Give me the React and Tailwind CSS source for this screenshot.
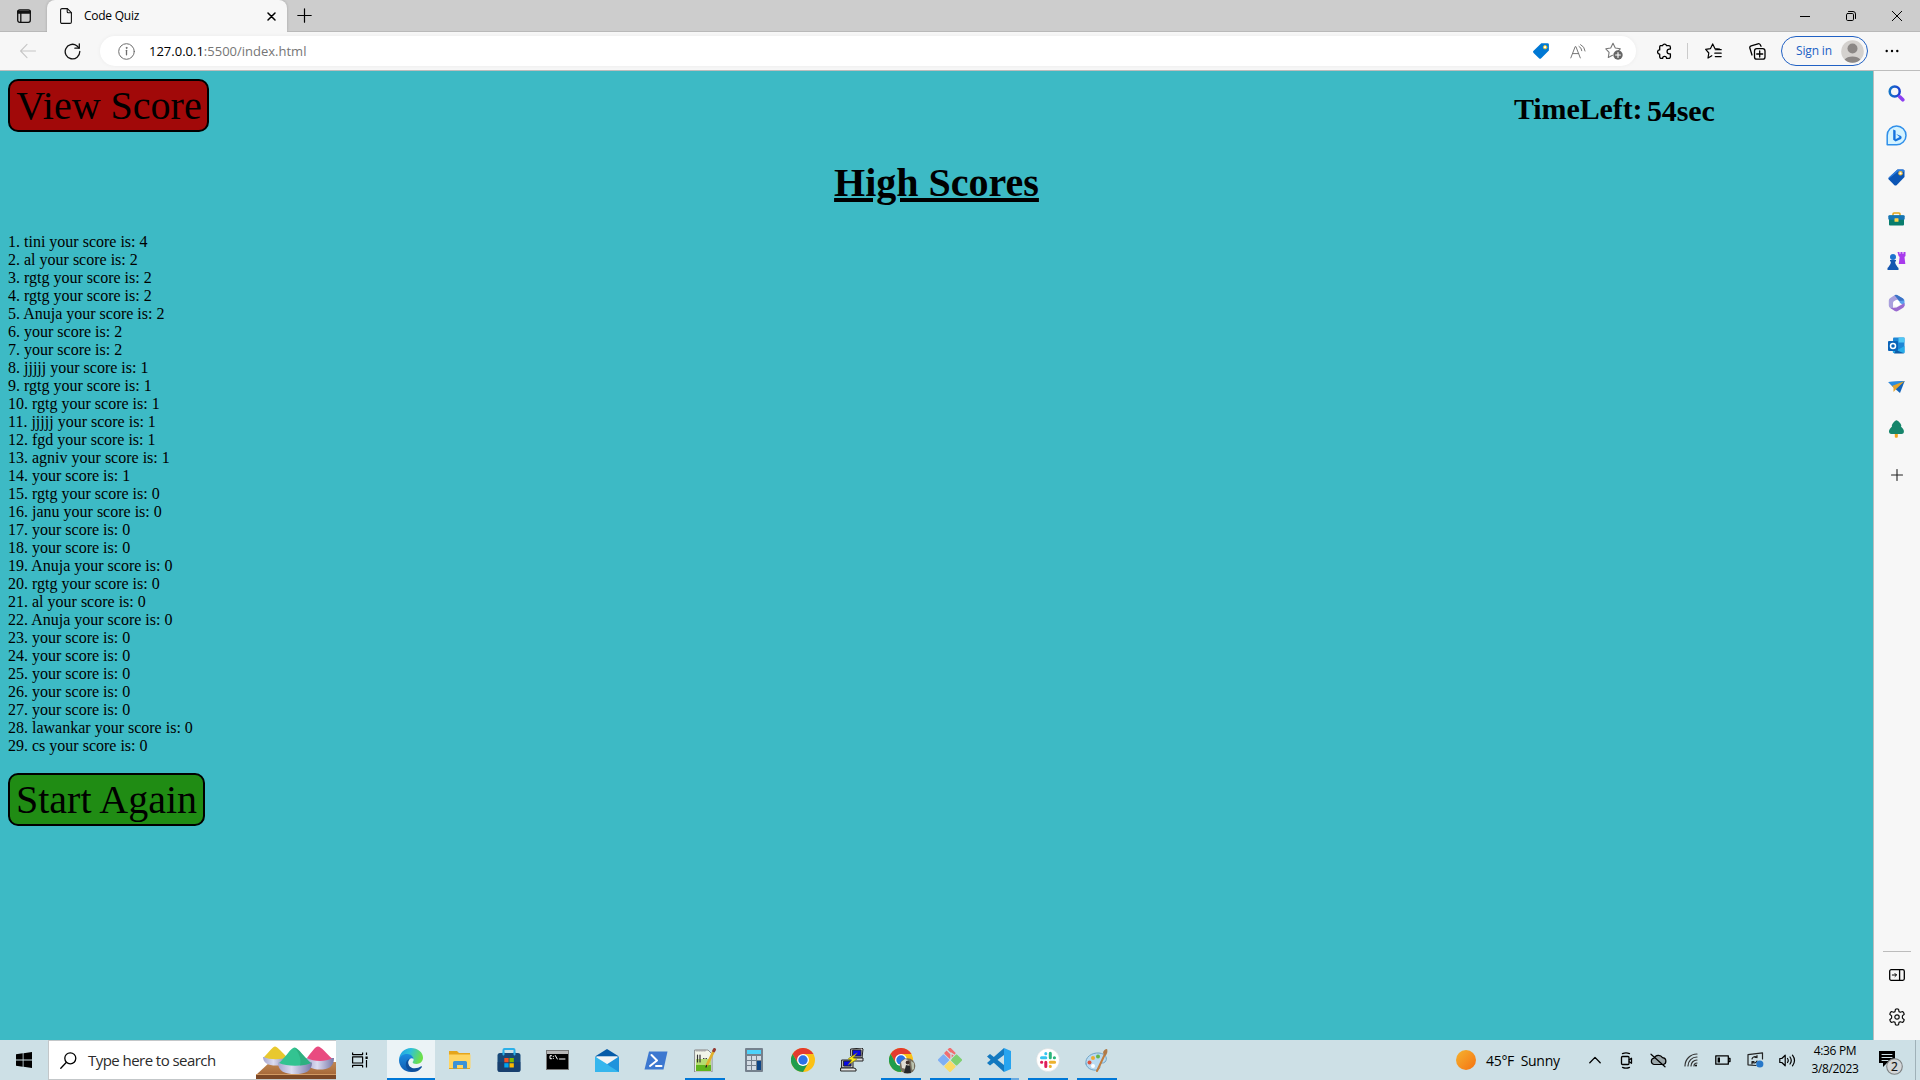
import React from "react";

const entries = [
  "tini your score is: 4", "al your score is: 2", "rgtg your score is: 2", "rgtg your score is: 2",
  "Anuja your score is: 2", "your score is: 2", "your score is: 2", "jjjjj your score is: 1",
  "rgtg your score is: 1", "rgtg your score is: 1", "jjjjj your score is: 1", "fgd your score is: 1",
  "agniv your score is: 1", "your score is: 1", "rgtg your score is: 0", "janu your score is: 0",
  "your score is: 0", "your score is: 0", "Anuja your score is: 0", "rgtg your score is: 0",
  "al your score is: 0", "Anuja your score is: 0", "your score is: 0", "your score is: 0",
  "your score is: 0", "your score is: 0", "your score is: 0", "lawankar your score is: 0", "cs your score is: 0",
];

function Icon({ s = 20, w, h, sw = 1.1, stroke = "#111", fill = "none", children, className = "" }) {
  const W = w || s, H = h || s;
  return (
    <svg width={W} height={H} viewBox={`0 0 ${W} ${H}`} fill={fill} stroke={stroke} strokeWidth={sw} strokeLinecap="round" strokeLinejoin="round" className={`block shrink-0 ${className}`}>
      {children}
    </svg>
  );
}

function Cell({ className = "", children }) {
  return <div className={`flex shrink-0 items-center justify-center ${className}`}>{children}</div>;
}

function TitleBar() {
  return (
    <div className="flex h-8 bg-[#cdcdcd]">
      <Cell className="w-[47px] border-b border-[#b9b9b9] pl-px">
        <Icon s={14} sw={1.3}><rect x="0.7" y="0.9" width="12.6" height="12.4" rx="2" /><path d="M1 2.6h12M1 3.8h12" strokeWidth="2" /><path d="M3.8 4v9" /></Icon>
      </Cell>
      <div className="flex w-60 items-center rounded-t-lg bg-[#f7f7f7] pl-[13px] pr-[11px] shadow-[0_0_3px_rgba(0,0,0,0.2)]">
        <Icon w={12} h={16} sw={1.1}><path d="M2 .6h5.4l4 4V14a1.4 1.4 0 0 1-1.4 1.4H2A1.4 1.4 0 0 1 .6 14V2A1.4 1.4 0 0 1 2 .6z" /><path d="M7.2.8v3a1 1 0 0 0 1 1h3" /></Icon>
        <span className="ml-3 flex-1 text-[12px] leading-4 tracking-[-0.25px]">Code Quiz</span>
        <Icon s={9} sw={1.5} stroke="#000"><path d="M1 1l7 7M8 1L1 8" /></Icon>
      </div>
      <div className="flex flex-1 items-center border-b border-[#b9b9b9] pl-[10px]">
        <Icon s={15} sw={1.2} stroke="#000"><path d="M7.5.8v13.4M.8 7.5h13.4" /></Icon>
      </div>
      <div className="flex border-b border-[#b9b9b9]">
        <Cell className="w-[46px]"><Icon s={10} sw={1} stroke="#000"><path d="M0 5.5h10" /></Icon></Cell>
        <Cell className="w-[46px]"><Icon s={10} sw={1} stroke="#000"><rect x=".5" y="2.5" width="7" height="7" rx="1.2" /><path d="M2.5.5H7A2.5 2.5 0 0 1 9.500 3v4.500" /></Icon></Cell>
        <Cell className="w-[46px]"><Icon s={10} sw={1} stroke="#000"><path d="M.3.3l9.400 9.400M9.700.3L.3 9.700" /></Icon></Cell>
      </div>
    </div>
  );
}

function Toolbar() {
  return (
    <div className="flex h-[39px] items-center border-b border-[#bdbdbd] bg-[#f7f7f7]">
      <Cell className="w-14"><Icon s={16} sw={1.1} stroke="#c6c6c6"><path d="M15.500 8H.6M7 1.400L.6 8 7 14.600" /></Icon></Cell>
      <Cell className="w-8"><Icon s={17} sw={1.3}><path d="M15.800 8.500A7.300 7.300 0 1 1 12.800 2.700L15 5" /><path d="M15.300.8v4.400h-4.400" /></Icon></Cell>
      <div className="ml-3 flex h-[30px] w-[1536px] items-center rounded-full bg-white shadow-[0_0_4px_rgba(0,0,0,0.05)]">
        <Cell className="w-[52px]"><Icon s={17} sw={1} stroke="#6d6d6d"><circle cx="8.500" cy="8.500" r="7.800" /><path d="M8.500 7.300v4.500" strokeWidth="1.300" /><circle cx="8.500" cy="4.900" r=".5" fill="#6d6d6d" /></Icon></Cell>
        <span className="ml-[-3px] flex-1 pt-px text-[13px] text-[#767676]"><span className="text-black">127.0.0.1</span>:5500/index.html</span>
        <Cell className="w-9">
          <Icon w={16} h={16} stroke="none"><path d="M8.300.2H14.500A1.400 1.400 0 0 1 15.900 1.600V7.500L8.200 15.200a1.500 1.500 0 0 1-2.200 0L.6 9.900a1.500 1.500 0 0 1 0-2.200z" fill="#0078d4" /><circle cx="12.100" cy="4.200" r="1.700" fill="#fff" stroke="#e8c22e" strokeWidth="1" /></Icon>
        </Cell>
        <Cell className="w-9 pl-px"><Icon w={16} h={15} sw={1} stroke="#777"><path d="M.8 13.900L5.200 2.600h.7l4.400 11.300M2.500 9.600h6.200M9 2.400a5 5 0 0 1 2.800 4.300M10.600.6A8 8 0 0 1 15.100 7" /></Icon></Cell>
        <Cell className="mr-[5px] w-9 pl-px">
          <Icon w={18} h={18} sw={1.100} stroke="#777"><path d="M7.500 13.300L3.300 15.500l.8-5.100L.8 6.800l4.900-.8L8 1.300l2.300 4.700 5 .8-2 2" /><circle cx="13" cy="13" r="4.700" fill="#666" stroke="none" /><path d="M13 10.600v4.800M10.600 13h4.800" stroke="#fff" /></Icon>
        </Cell>
      </div>
      <Cell className="ml-[11px] w-9"><Icon w={16} h={17} sw={1.300} stroke="#000"><path d="M3.500 2.600h2.100a2 2 0 0 1 3.900 0h2.300a1.600 1.600 0 0 1 1.600 1.600v1.900h-1a2.300 2.300 0 0 0 0 4.700h1v3a1.600 1.600 0 0 1-1.600 1.600H9.600a2 2 0 0 0-4 0H4.300a1.600 1.600 0 0 1-1.600-1.600v-2.700a2.100 2.100 0 0 1 0-4.200V4a1.500 1.500 0 0 1 .8-1.400z" /></Icon></Cell>
      <div className="ml-[4px] h-4 w-px bg-[#cbcbcb]" />
      <Cell className="ml-[4px] w-[42px]"><Icon w={17} h={16} sw={1.200} stroke="#000"><path d="M6.800 12.700L3 15l.8-5L.7 6.300l4.800-.7L7.700.9l2.200 4.700 4.700.6M10.300 6.700h5.900M9.800 10.200h6.400M10.300 13.600h5.900" /></Icon></Cell>
      <Cell className="ml-[2px] w-[42px]"><Icon s={17} sw={1.300} stroke="#000"><rect x="5.500" y="5.700" width="10.500" height="10.500" rx="2.300" /><path d="M10.700 8v6M7.700 11h6M3 12L.9 5.300a2 2 0 0 1 1.300-2.500L9 .8a2 2 0 0 1 2.500 1.500l.5 1" /></Icon></Cell>
      <div className="ml-[3px] flex h-[30px] w-[87px] items-center justify-between rounded-full border border-[#2161c4] pl-[14px] pr-[3px]">
        <span className="whitespace-nowrap text-[12px] tracking-[-0.15px] text-[#2161c4]">Sign in</span>
        <Icon s={23} stroke="none"><circle cx="11.500" cy="11.500" r="11.300" fill="#d4d1ce" /><circle cx="11.500" cy="8.500" r="5" fill="#8b8785" /><path d="M3.600 19.500a9 5.800 0 0 1 15.800 0 11.300 11.300 0 0 1-15.800 0z" fill="#8b8785" /></Icon>
      </div>
      <Cell className="w-12"><Icon w={14} h={4} stroke="none" fill="#000"><circle cx="1.700" cy="2" r="1.200" /><circle cx="7" cy="2" r="1.200" /><circle cx="12.300" cy="2" r="1.200" /></Icon></Cell>
    </div>
  );
}

const sideIcons = [
  <Icon s={17} stroke="url(#gs)" sw={2.500}><defs><linearGradient id="gs"><stop stopColor="#1474c8" /><stop offset="1" stopColor="#1c3fd0" /></linearGradient></defs><circle cx="6.700" cy="6.500" r="5" /><path d="M11.800 11.800l3 3" stroke="#8d3ff0" strokeWidth="3.600" /></Icon>,
  <Icon s={21} stroke="#2f8fea" sw={1.500}><path d="M1.200 19.800V10.400a9.400 9.400 0 1 1 9.400 9.400z" fill="#d4f3ff" /><path d="M7.200 4.500l2.400 1v8.700l4-2.300-3.500-2.800 5 2a2.500 2.500 0 0 1 0 3l-5.500 2.300-2.400-1.600z" fill="#1473df" stroke="none" /></Icon>,
  <Icon w={17} h={17} stroke="none"><path d="M9.500.5H15A1.500 1.500 0 0 1 16.500 2V8L8.800 16a2 2 0 0 1-2.600 0L.8 10.600a1.500 1.500 0 0 1 0-2z" fill="#0b55b5" /><path d="M9.500.5H15A1.500 1.500 0 0 1 16.500 2l-1 1-5.500-.5-9 7-.2-1z" fill="#2f7ede" /><circle cx="12.500" cy="4.300" r="1.700" fill="#fff" stroke="#f2bd3b" /></Icon>,
  <Icon w={17} h={14} stroke="none"><path d="M5 4V2a1 1 0 0 1 1-1h5a1 1 0 0 1 1 1v2" stroke="#e3a51a" strokeWidth="1.500" /><rect x="1" y="3.500" width="15" height="10" rx="1" fill="#087d6d" /><rect x=".3" y="3.300" width="16.400" height="4.500" rx="1" fill="#1675b5" /><rect x="6.500" y="6.300" width="4" height="3.500" rx=".5" fill="#ffd54a" /></Icon>,
  <Icon w={19} h={18} stroke="none"><path d="M10.500 0h2v1.700h1V0h2v1.700h1V0h2v4l-1 1 .8 7h-6.500l.8-7-1-1z" fill="#a83bec" /><circle cx="6" cy="5" r="3" fill="#1c72cf" /><path d="M3 8h6v1.500H8q0 3 2.500 5.500l1 1v2H.5v-2l1-1Q4 12.500 4 9.500H3z" fill="#1556b0" /></Icon>,
  <Icon w={17} h={18} stroke="none"><path d="M6.500 1.200a3 3 0 0 1 3 0L15 4.400A3 3 0 0 1 16.500 7v5l-5-3.500L10 5.800z" fill="#5aa0ec" /><path d="M6.500 1.200L2.300 3.900A3 3 0 0 0 .8 6.500v5a3 3 0 0 0 1.500 2.500L5 15V8.500l5-3-1-4.500z" fill="#a9a0dd" /><path d="M6.500 1.200a3 3 0 0 1 3 0L15 4.400l1 2-4.500.5L10 5.500z" fill="#3b72c5" /><path d="M2.300 14l4.500 3a3 3 0 0 0 3 0l5-3a3 3 0 0 0 1.700-2.500V9l-4.500 2.500-3.500 2z" fill="#9a6ad0" /><path d="M8.500 5.800l3 1.700v3.400l-3 1.700-3-1.700V7.500z" fill="#fff" /></Icon>,
  <Icon w={17} h={17} stroke="none"><rect x="5" y=".5" width="11.500" height="15.500" rx="1" fill="#1e86d5" /><path d="M10.500.5h6v5h-6z" fill="#50c8f5" /><path d="M4 9l6.500 3.500 6-3.500v7H5z" fill="#28aeea" /><path d="M8 13l8.500 3.500H6z" fill="#0d5da8" /><rect x="0" y="4" width="10" height="10" rx="1" fill="#0a63b8" /><circle cx="5" cy="9" r="2.500" stroke="#fff" strokeWidth="1.500" /></Icon>,
  <Icon w={17} h={14} stroke="none"><path d="M.3 2L16.700 1 12 13 5 7z" fill="#1263ba" /><path d="M.3 2L16.700 1 5 6.500z" fill="#2a8de0" /><path d="M16.700 1L4 6l1.500 1.500V12l2.700-3z" fill="#e5a42b" /></Icon>,
  <Icon w={17} h={18} stroke="none"><rect x="6.800" y="12" width="3" height="5.800" rx="1" fill="#f2a41b" /><path d="M8.500.3c1.500 0 5 4 4.800 5.400-.1.800-.4.800-.4.800 1.600 1.500 3.400 3.700 3 5.400-.4 2-1.800 2.200-4 2.200H5c-2.300 0-3.500-.3-4-2.200-.3-1.700 1.500-3.900 3-5.400C3 5 7 .3 8.500.3z" fill="#16856b" /></Icon>,
];

function SideBar() {
  return (
    <aside className="flex w-[47px] flex-col items-center border-l border-[#bdbdbd] bg-[#f7f7f7] pr-px pt-px">
      {sideIcons.map((ic, i) => <Cell key={i} className="h-[42px] w-full">{ic}</Cell>)}
      <Cell className="mt-1 h-[42px] w-full"><Icon s={12} sw={1.100} stroke="#222"><path d="M6 .5v11M.5 6h11" /></Icon></Cell>
      <div className="flex-1" />
      <div className="h-px w-7 bg-[#bcbcbc]" />
      <Cell className="mt-[2px] h-[42px] w-full"><Icon w={16} h={12} sw={1.300} stroke="#000"><rect x=".7" y=".7" width="14.600" height="10.600" rx="1.500" /><path d="M10.600 1v10" /><path d="M3.300 6h4M6 4.500l1.500 1.500L6 7.500" strokeWidth="1" /></Icon></Cell>
      <Cell className="mb-[2px] h-[42px] w-full">
        <Icon s={18} sw={1.200}><path d="M7.500 1.200Q9 .6 10.500 1.200L11 3.600l1.300.7 2.300-.8q1.200 1 1.600 2.700l-1.800 1.700v2.200l1.800 1.700q-.4 1.600-1.600 2.700l-2.300-.8-1.300.7-.5 2.400q-1.500.6-3 0L7 14.400l-1.300-.7-2.300.8q-1.200-1-1.600-2.700l1.800-1.700V7.900L1.800 6.200q.4-1.600 1.600-2.700l2.300.8L7 3.600z" /><circle cx="9" cy="9" r="2.200" /></Icon>
      </Cell>
    </aside>
  );
}

function QuizPage() {
  return (
    <main className="flex-1 bg-[#3dbac5] px-2 pt-2 font-['Liberation_Serif','Times_New_Roman',serif] text-black">
      <div className="flex h-[53px] items-start">
        <button className="flex h-[53px] w-[201px] items-center justify-center whitespace-nowrap rounded-[10px] border-2 border-black bg-[#a10909] pl-px pt-px text-[40px] leading-none">View Score</button>
        <h2 className="ml-[1305px] mt-[13px] w-[129px] whitespace-nowrap text-[30px] font-bold leading-[34px] tracking-[-0.1px]">TimeLeft:</h2>
        <span className="ml-[4px] mt-[15px] text-[30px] font-bold leading-[34px] tracking-[-0.15px]">54sec</span>
      </div>
      <h1 className="mt-[28px] text-center text-[40px] font-bold leading-[46px] underline">High Scores</h1>
      <ol className="mt-[27px] text-[16px] leading-[18px]">
        {entries.map((t, i) => <li key={i}>{i + 1}. {t}</li>)}
      </ol>
      <button className="mt-[18px] flex h-[53px] w-[197px] items-center justify-center whitespace-nowrap rounded-[10px] border-2 border-black bg-[#208c14] pt-px text-[40px] leading-none">Start Again</button>
    </main>
  );
}

function Chrome() {
  return (
    <g stroke="none">
      <circle cx="12" cy="12" r="12" fill="#fbc116" />
      <path d="M12 6h10.400A12 12 0 0 0 1.600 6L6.800 15z" fill="#e33b2e" />
      <path d="M1.600 6A12 12 0 0 0 12 24l5.200-9-5.200 3-5.200-3z" fill="#1f9d4d" />
      <circle cx="12" cy="12" r="6" fill="#fff" /><circle cx="12" cy="12" r="4.700" fill="#2b72e6" />
    </g>
  );
}

const apps = [
  { bar: "edge", icon: <Icon s={24} stroke="none"><defs><linearGradient id="e1" x1="0" y1="0" x2="1" y2=".3"><stop stopColor="#1e9de8" /><stop offset=".5" stopColor="#2fc1d8" /><stop offset="1" stopColor="#6be04b" /></linearGradient><linearGradient id="e2" x1="0" y1="0" x2="0" y2="1"><stop stopColor="#1b8ce0" /><stop offset="1" stopColor="#0f5bb0" /></linearGradient></defs><path d="M0 11.500C.5 5 5.500 0 12 0c7 0 12 4.500 12 9.800 0 3.700-2.900 6.200-6.500 6.200-2.600 0-3.900-.9-3.900-1.700 0-.7 1-1 1-2.600C14.600 9 12 7 8.600 7 4.500 7 1.500 9 0 11.500z" fill="url(#e1)" /><path d="M0 12C.5 8.500 4 5.800 8.500 6c3.500.2 6 2.500 6.100 5.200C13 9 10 10.500 9.200 13.500c-.8 4 2.500 9 7.300 9.400-1.300.8-3 1.100-4.500 1.100C5 24 0 18.500 0 12z" fill="url(#e2)" /><path d="M9.300 13c-1 4 2.200 7.300 6.500 7.300 2.500 0 4.500-1 6.300-2 .6-.3 1.200.2.7.9-1.500 2.300-4 4-6.500 4.600C10 24.500 6.700 20 6.800 16.500c0-3 1.500-4.700 3.700-5.700z" fill="#0d4f9c" /></Icon> },
  { icon: <Icon w={22} h={20} stroke="none"><path d="M0 1h8l2 2h11v16H0z" fill="#e5a51c" /><path d="M0 4.500h21.500V18H0z" fill="#ffd563" /><path d="M4 18.500v-6a1.500 1.500 0 0 1 1.500-1.500h11A1.500 1.500 0 0 1 18 12.500v6h-4V15H8v3.500z" fill="#3c91d6" /></Icon> },
  { icon: <Icon s={24} stroke="none"><path d="M6.500 7V2a1 1 0 0 1 1-1h9a1 1 0 0 1 1 1v5" stroke="#2bb0e8" strokeWidth="2" /><rect x=".5" y="5" width="23" height="19" rx="2.500" fill="#174878" /><path d="M.5 14h23v7.500A2.500 2.500 0 0 1 21 24H3a2.500 2.500 0 0 1-2.500-2.500z" fill="#193a67" opacity=".6" /><path d="M6.500 5v1.500M17.500 5v1.500" stroke="#2bb0e8" strokeWidth="2" /><path d="M7.300 10h4.300v4.300H7.300z" fill="#f25022" /><path d="M12.500 10h4.300v4.300h-4.300z" fill="#7fba00" /><path d="M7.300 15.200h4.300v4.300H7.300z" fill="#00a4ef" /><path d="M12.500 15.200h4.300v4.300h-4.300z" fill="#ffb900" /></Icon> },
  { icon: <Icon w={23} h={20} stroke="none"><rect width="23" height="20" fill="#777" /><rect x="1" y="1" width="21" height="3" fill="#b6b6b6" /><rect x="1" y="4" width="21" height="15" fill="#000" /><path d="M5.500 5.700H4v3h1.500M7.300 6.300v.2M7.300 8.300v.2M9.300 5.500l2 3.500M13.500 9H19" stroke="#fff" strokeWidth="1" /></Icon> },
  { icon: <Icon w={24} h={23} stroke="none"><path d="M0 7.500L12 0l12 7.500z" fill="#075ba8" /><path d="M2 7.500h20V18H2z" fill="#f4f4f4" /><path d="M24 7.500V23H0z" fill="#1e93dc" /><path d="M0 7.500L12 15l2.500 2L24 23H0z" fill="#35b6ed" /></Icon> },
  { icon: <Icon w={24} h={19} stroke="none"><path d="M5 .5h18.500L19.500 18.500H.5z" fill="#3c78d0" /><path d="M7.500 4l5.500 5.500-7 5.500M12 15h5.500" stroke="#fff" strokeWidth="2" /></Icon> },
  { bar: "on", icon: <Icon s={24} stroke="none"><path d="M2 2h13l4 4v18H2z" fill="#f1f5e9" stroke="#777" strokeWidth=".8" /><path d="M3 14h15v9H3z" fill="#60b51c" /><path d="M3 11h15v6H3z" fill="#b5dd71" /><path d="M3.500 2.500h9" stroke="#aaa" strokeWidth="2" strokeDasharray="1 1.500" /><path d="M4.500 7v7M7 7v7M10.500 10.500h.5M13 10.500h.5" stroke="#333" strokeWidth="1.200" /><path d="M21 2.500L14 17" stroke="#e0b02c" strokeWidth="2.800" /><path d="M21.500 1.500l-.7 1.300" stroke="#943a34" strokeWidth="3" /><path d="M13.700 17.500L13 19" stroke="#222" strokeWidth="1.300" /></Icon> },
  { icon: <Icon w={18} h={24} stroke="none"><rect width="18" height="24" rx="1" fill="#75818d" /><rect x="2" y="2" width="14" height="4" fill="#4dd2fa" /><path d="M2 8h4v4H2zM7 8h4v4H7zM12 8h4v4h-4zM2 13h4v4H2zM7 13h4v4H7zM2 18h4v4H2zM7 18h4v4H7z" fill="#d3dce4" /><path d="M12 13h4v9h-4z" fill="#0d4586" /></Icon> },
  { icon: <Icon s={24}><Chrome /></Icon> },
  { icon: <Icon s={24} stroke="#222" sw={1}><path d="M11 1l11-1 1 1-1 9h-8l-3-2z" fill="#c9c9c9" /><path d="M13 2h8v6h-8z" fill="#0808e8" /><path d="M10 10h13v3H11z" fill="#ddd" /><path d="M2 12h10l1 1v7H2z" fill="#c9c9c9" /><path d="M4 13h7v5H4z" fill="#0808e8" /><path d="M1 20h13l2 1v2H1z" fill="#e8e8e8" /><path d="M17 5L8 11l4 1-4 5 9-6-4-1z" fill="#ffec16" stroke="#8d8200" strokeWidth=".5" /></Icon> },
  { bar: "on", icon: <Icon w={27} h={26} className="ml-[3px] mt-[2px]"><Chrome /><g stroke="none"><circle cx="18.500" cy="18" r="7.800" fill="#756d5e" /><path d="M12 14l4-3 3 1 1 5-3 4-4-1z" fill="#e0ddd4" /><circle cx="18.700" cy="14.500" r="2" fill="#40312b" /><path d="M17 17l4 1 1 7h-7z" fill="#26282a" /><path d="M22 13l3 2v6l-2 1z" fill="#bac2ae" /></g></Icon> },
  { bar: "on", icon: <Icon s={24} stroke="none"><rect x="7.700" y="1" width="8.500" height="8.500" rx="1" transform="rotate(45 12 5.200)" fill="#f06e70" /><rect x="1.200" y="7.700" width="8.500" height="8.500" rx="1" transform="rotate(45 5.500 12)" fill="#7faff4" /><rect x="14.200" y="7.700" width="8.500" height="8.500" rx="1" transform="rotate(45 18.500 12)" fill="#7fd072" /><rect x="7.700" y="14.200" width="8.500" height="8.500" rx="1" transform="rotate(45 12 18.500)" fill="#fada65" /><path d="M9 2l4 4v5M13 5l3 2" stroke="#cfe1e6" strokeWidth="1.300" /></Icon> },
  { bar: "split", icon: <Icon s={24} stroke="none"><path d="M17 0v7L3 17.500 0 15z" fill="#137ac1" /><path d="M0 8.500L3 6l14 11v7z" fill="#1278bf" /><path d="M17 0l7 3v18l-7 3z" fill="#27a4ef" /></Icon> },
  { bar: "on", icon: <Icon s={24} sw={3}><circle cx="12" cy="12" r="11.500" fill="#fff" stroke="#d8d8d8" strokeWidth=".5" /><path d="M9.800 9.700H5.500M9.800 5.500v.3" stroke="#36c5f0" /><path d="M14.300 5.300v4.500M18.500 9.800h-.2" stroke="#2eb67d" /><path d="M14.300 14.300h4.300M14.300 18.500v-.2" stroke="#ecb22e" /><path d="M9.800 14.300v4.300M5.500 14.300h.3" stroke="#e01e5a" /></Icon> },
  { bar: "on", icon: <Icon s={24} stroke="none"><path d="M1 16C-.5 9 7 4.500 14 5c7 .5 9 6 6 9-2 2-4 0-5 2s1 3-1 5c-3 2.500-12 1-13-5z" fill="#b9daf0" stroke="#70a4c6" strokeWidth="1" /><circle cx="4.500" cy="14.500" r="2" fill="#db5440" /><circle cx="8" cy="10" r="2" fill="#efaa35" /><circle cx="13" cy="8.500" r="2" fill="#63b64a" /><circle cx="8" cy="18" r="2" fill="#fff" /><path d="M20 6l-8 17" stroke="#c17d3e" strokeWidth="2" /><path d="M18 5c0-2 2-4 4-4 1 2 0 6-2 7z" fill="#b07a48" /></Icon> },
];

function HoliArt() {
  return (
    <Icon w={80} h={38} stroke="none">
      <defs><linearGradient id="wd" x1="0" y1="0" x2="0" y2="1"><stop stopColor="#c18851" /><stop offset="1" stopColor="#a56739" /></linearGradient><linearGradient id="bw"><stop stopColor="#a5a5cf" /><stop offset=".4" stopColor="#dcdcf0" /><stop offset="1" stopColor="#7777a8" /></linearGradient></defs>
      <path d="M14 21h66v13H0z" fill="url(#wd)" /><path d="M0 34h80v4H0z" fill="#7c4826" /><path d="M0 33.500h80" stroke="#d39a63" />
      <path d="M7 16h26c0 6-5 8.500-13 8.500S7 22 7 16z" fill="url(#bw)" /><path d="M8 16C12 12 17 5.500 19 5.500S27 12 31 16c-5 3-18 3-23 0z" fill="#e8c82e" />
      <path d="M50 17h28c0 9-6 11.500-14 11.500S50 26 50 17z" fill="url(#bw)" /><path d="M51 17C55 12 59 5.500 62 5.500S71 13 76 17.500c-7 3.500-19 3-25-.5z" fill="#e94b80" />
      <path d="M22 21.500h34c0 9-7 11.500-17 11.500s-17-2.500-17-11.500z" fill="url(#bw)" /><path d="M23 22C29 17 35 6.500 38.500 6.500S49 17 55 22c-8 3.500-24 3.500-32 0z" fill="#33c391" /><path d="M38.500 6.500C42 6.500 49 17 55 22q-6 2.500-11 2.500C46 18 42 10 38.500 6.500z" fill="#279e70" opacity=".5" />
    </Icon>
  );
}

function Taskbar() {
  return (
    <footer className="flex h-10 bg-[#cde0e6] text-black">
      <Cell className="w-12"><Icon s={16} stroke="none" fill="#000"><path d="M0 2.300l6.700-1v6.300H0zM7.500 1.200L16 0v7.600H7.500zM0 8.400h6.700v6.300L0 13.800zM7.500 8.400H16V16l-8.500-1.200z" /></Icon></Cell>
      <div className="flex h-10 w-[288px] items-center overflow-hidden border border-r-0 border-[#c3c7c9] bg-white pl-[11px]">
        <Icon s={17} sw={1.300} stroke="#000"><circle cx="10.300" cy="6.300" r="5.500" /><path d="M6.200 10.500L.8 16.200" /></Icon>
        <span className="ml-[11px] flex-1 whitespace-nowrap text-[15px] tracking-[-0.55px] text-[#2b2b2b]">Type here to search</span>
        <HoliArt />
      </div>
      <Cell className="w-[51px] pr-[3px]"><Icon s={16} sw={1.200} stroke="#000"><path d="M.6.600v2h10v-2M.6 15.400v-2h10v2M.6 4.800h10v6.200H.6zM14.500.6v2.500M14.500 8v7.400" strokeLinecap="butt" /><rect x="13.500" y="4.500" width="2.200" height="2.500" fill="#000" stroke="none" /></Icon></Cell>
      {apps.map((a, i) => (
        <div key={i} className={a.bar === "edge" ? "flex w-12 flex-col items-center bg-[#ebf3f6]" : "flex w-[49px] flex-col items-center"}>
          <Cell className="h-[38px] pt-[2px]">{a.icon}</Cell>
          {a.bar === "edge" && <div className="h-[2px] w-full bg-[#0078d7]" />}
          {a.bar === "on" && <div className="h-[2px] w-10 bg-[#0078d7]" />}
          {a.bar === "split" && <div className="flex h-[2px] w-10 bg-[#69abe1]"><div className="w-8 bg-[#0078d7]" /></div>}
        </div>
      ))}
      <div className="flex-1" />
      <div className="flex items-center">
        <div className="mr-[10px] size-5 rounded-full bg-gradient-to-br from-[#f4b32f] to-[#f4700f]" />
        <span className="w-[93px] whitespace-pre text-[14px] tracking-[-0.3px]">45°F  Sunny</span>
        <Cell className="w-[31px]"><Icon w={12} h={8} sw={1.300} stroke="#000"><path d="M.8 6.800L6 1.400l5.200 5.400" /></Icon></Cell>
        <Cell className="w-8"><Icon w={13} h={17} sw={1.300} stroke="#000"><path d="M2.500 1.600q3.500-1.600 7 0M2.500 15.400q3.500 1.600 7 0" /><rect x="1.500" y="4.500" width="7.500" height="8" rx="1" /><path d="M9.200 7.800l2.300-1.500v5L9.200 9.800" /></Icon></Cell>
        <Cell className="w-[33px]"><Icon w={17} h={15} sw={1.200} stroke="#000"><path d="M4 11.500a3.200 3.200 0 0 1 0-6.300 4.800 4.800 0 0 1 8.500-.6 3.500 3.500 0 0 1 .7 6.900z" fill="#9ba7aa" /><path d="M1 1.200l14 12.600" /></Icon></Cell>
        <Cell className="w-8"><Icon w={14} h={14} sw={1.200} stroke="#333"><path d="M1 13A12 12 0 0 1 13 1M4 13a9 9 0 0 1 9-9M7 13a6 6 0 0 1 6-6M10 13a3 3 0 0 1 3-3" /><circle cx="12" cy="12.400" r="1" fill="#000" stroke="none" /></Icon></Cell>
        <Cell className="w-8"><Icon w={16} h={10} sw={1.300} stroke="#000"><path d="M.8.8h12.500v8.400H.8zM13.500 3.500h1.500v3h-1.500" /><path d="M2.600 2.500h2.400v5H2.600z" fill="#000" stroke="none" /></Icon></Cell>
        <Cell className="w-8"><Icon w={17} h={16} sw={1.200} stroke="#222"><path d="M9 13.500l-8-.7V2.700L15.500.800V7" /><path d="M5 7a3 3 0 0 1 5-1.500M10 3.500v2H8M5 12V9.500h2M10 9a3 3 0 0 1-5 1" /><circle cx="12.800" cy="12" r="3.600" fill="#2878c9" stroke="none" /></Icon></Cell>
        <Cell className="w-8"><Icon w={17} h={13} sw={1.200} stroke="#000"><path d="M.8 4.500h2L6.200 1.200v10.600L2.800 8.500h-2zM8.500 4.500q1.500 2 0 4M11 3q2.500 3.500 0 7M13.500 1.200q4 5.300 0 10.600" /></Icon></Cell>
        <div className="ml-[2px] w-[60px] whitespace-nowrap text-center text-[12px] leading-[18px] tracking-[-0.35px]"><div>4:36 PM</div><div>3/8/2023</div></div>
        <div className="ml-[7px] flex w-[43px] pl-[6px] pt-[5px]">
          <Icon w={26} h={26} stroke="none"><path d="M1 1h16v12H9l-4 4v-4H1z" fill="#000" /><path d="M4 4.500h10M4 7.500h10M4 10.500h6" stroke="#cde0e6" strokeWidth="1" /><circle cx="16.500" cy="16.500" r="7.800" fill="#d3d6d8" stroke="#7d8182" /><text x="16.500" y="20.800" textAnchor="middle" fontSize="12" fill="#111" stroke="#111" strokeWidth=".2">2</text></Icon>
        </div>
        <div className="mr-1 h-10 w-px bg-[#9fb1b8]" />
      </div>
    </footer>
  );
}

export default function App() {
  return (
    <div className="flex h-[1080px] w-[1920px] flex-col overflow-hidden font-['Segoe_UI','Open_Sans',sans-serif] text-black">
      <TitleBar />
      <Toolbar />
      <div className="flex min-h-0 flex-1"><QuizPage /><SideBar /></div>
      <Taskbar />
    </div>
  );
}
